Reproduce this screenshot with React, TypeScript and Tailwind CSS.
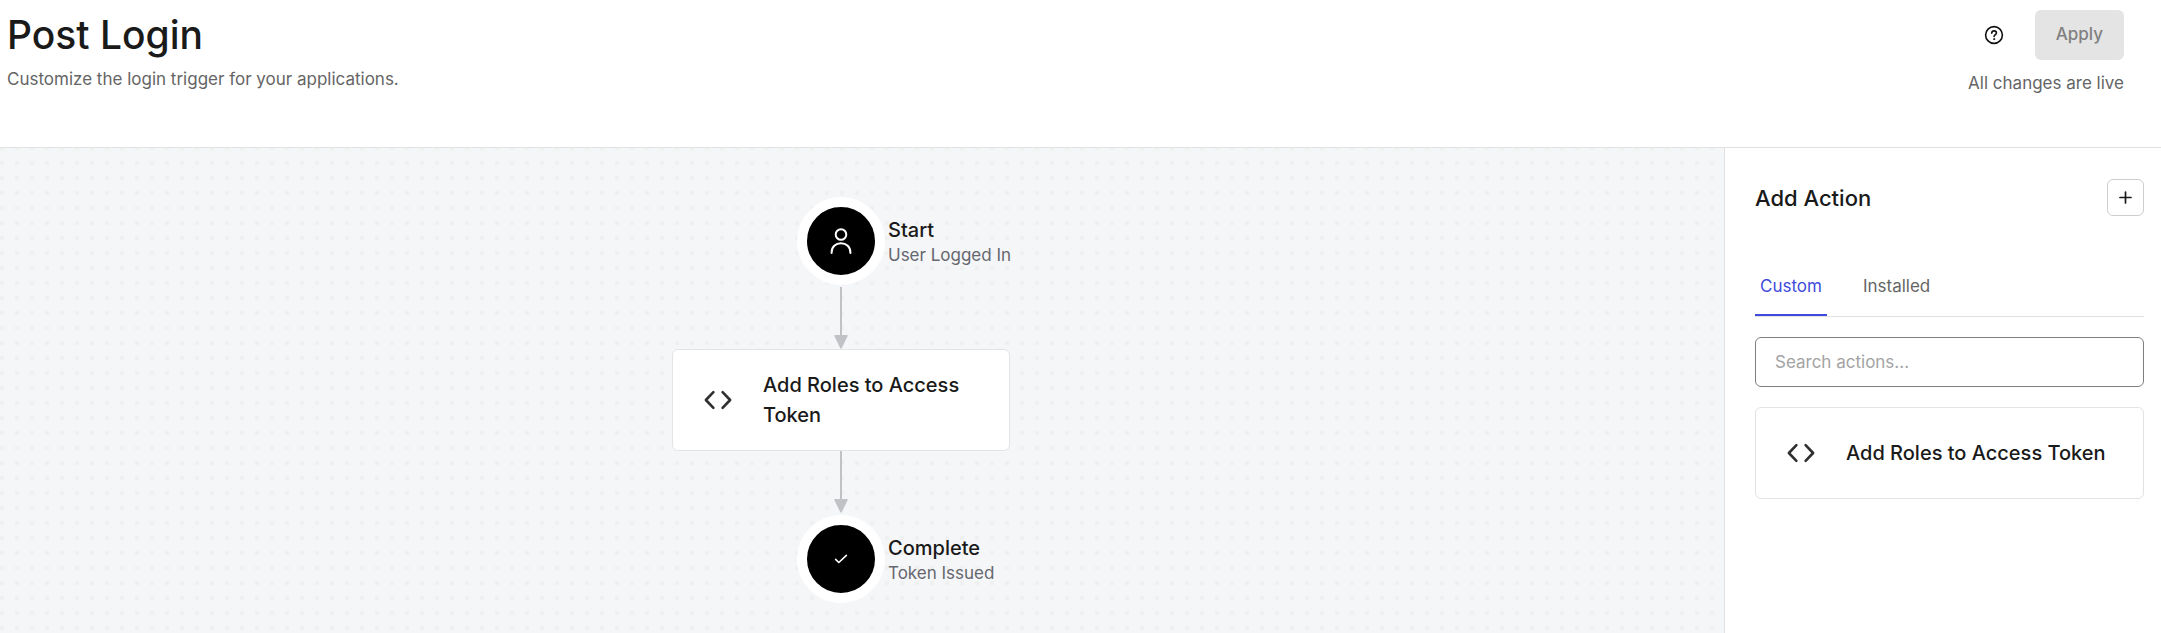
import type { ReactNode } from "react";

function CodeIcon() {
  return (
    <svg width="28" height="20" viewBox="0 0 28 20" fill="none" stroke="#2f2f2f" strokeWidth="2.6" strokeLinecap="round" strokeLinejoin="round" aria-hidden="true" className="shrink-0">
      <path d="M9.4 2.1 L1.9 10 L9.4 17.9" />
      <path d="M18.6 2.1 L26.1 10 L18.6 17.9" />
    </svg>
  );
}

function UserIcon() {
  return (
    <svg width="24" height="28" viewBox="0 0 24 28" fill="none" stroke="#fff" strokeWidth="2" strokeLinecap="round" aria-hidden="true">
      <circle cx="12" cy="7.5" r="5.3" />
      <path d="M2.6 26 V25.4 C2.6 20 6.6 16.2 12 16.2 C17.4 16.2 21.4 20 21.4 25.4 V26" />
    </svg>
  );
}

function CheckIcon() {
  return (
    <svg width="14" height="10" viewBox="0 0 14 10" fill="none" stroke="#fff" strokeWidth="1.6" strokeLinecap="round" strokeLinejoin="round" aria-hidden="true">
      <path d="M1.6 5.4 L4.8 8.5 L12.4 1.4" />
    </svg>
  );
}

function HelpIcon() {
  return (
    <svg width="20" height="20" viewBox="0 0 20 20" fill="none" stroke="#111" strokeWidth="1.6" strokeLinecap="round" strokeLinejoin="round" aria-hidden="true">
      <circle cx="10" cy="10" r="8.4" />
      <path d="M7.7 8.1 C7.8 6.6 8.8 5.9 10.1 5.9 C11.5 5.9 12.4 6.8 12.4 7.9 C12.4 9.5 10.1 9.6 10.1 11.4" />
      <circle cx="10.1" cy="14.1" r="0.6" fill="#111" strokeWidth="0.8" />
    </svg>
  );
}

function Arrow() {
  return (
    <svg width="14" height="62" viewBox="0 0 14 62" fill="#c0c2c6" aria-hidden="true" className="shrink-0">
      <rect x="6" y="0" width="2" height="50" />
      <path d="M1 48 H13 Q14.2 48 13.7 49 L7.8 61 Q7 62.4 6.2 61 L0.3 49 Q-0.2 48 1 48 Z" />
    </svg>
  );
}

function Step({ icon, title, detail }: { icon: ReactNode; title: string; detail: string }) {
  return (
    <div className="grid grid-cols-[1fr_88px_1fr] items-center self-stretch">
      <div className="col-start-2 flex size-[88px] items-center justify-center rounded-full border-10 border-white bg-black">
        {icon}
      </div>
      <div className="pt-1 pl-[3px]">
        <h2 className="text-xl leading-6 font-medium text-[#1a1a1a]">{title}</h2>
        <p className="text-[17px] leading-[26px] text-[#65676e]">{detail}</p>
      </div>
    </div>
  );
}

export default function App() {
  return (
    <div className="flex min-h-screen flex-col bg-white font-['Inter',sans-serif] text-[#1a1a1a]">
      <header className="flex min-h-[148px] items-start justify-between border-b border-[#e1e1e2] pr-[37px] pl-[7px]">
        <div className="pt-2.5">
          <h1 className="text-[39px] leading-[50px] font-medium">Post Login</h1>
          <p className="pt-1.5 text-[17px] leading-[26px] text-[#656565]">Customize the login trigger for your applications.</p>
        </div>
        <div className="flex flex-col items-end pt-2.5">
          <div className="flex items-center gap-[31px]">
            <button type="button" aria-label="Help"><HelpIcon /></button>
            <button type="button" disabled className="h-[50px] rounded-md bg-[#e4e4e4] px-[21px] text-[17px] font-medium text-[#808080]">Apply</button>
          </div>
          <p className="pt-2.5 text-[17px] leading-[26px] text-[#656565]">All changes are live</p>
        </div>
      </header>

      <div className="flex flex-1">
        <main
          className="flex flex-1 flex-col items-center bg-[#f5f6f8] bg-[conic-gradient(from_270deg_at_4px_4px,#eff0f0_90deg,transparent_0)] bg-[length:15px_15px] bg-[position:0_-2px] pr-[42px]"
        >
          <div className="flex w-full flex-col items-center pt-[49px] pb-[30px]">
            <Step icon={<UserIcon />} title="Start" detail="User Logged In" />
            <div className="pt-0.5"><Arrow /></div>
            <div className="flex min-h-[102px] w-[338px] items-center gap-[31px] rounded-md border border-[#e3e4e6] bg-white pr-7 pl-[31px]">
              <CodeIcon />
              <h3 className="text-xl leading-[30px] font-medium">Add Roles to Access Token</h3>
            </div>
            <div className="pb-0.5"><Arrow /></div>
            <Step icon={<CheckIcon />} title="Complete" detail="Token Issued" />
          </div>
        </main>

        <aside className="w-[437px] shrink-0 border-l border-[#e1e1e2] pt-[31px] pr-[17px] pl-[30px]">
          <div className="flex items-center justify-between">
            <h2 className="text-[22px] leading-8 font-medium">Add Action</h2>
            <button type="button" aria-label="Create action" className="flex size-[37px] items-center justify-center rounded-md border border-[#cecece]">
              <svg width="13" height="13" viewBox="0 0 13 13" stroke="#1a1a1a" strokeWidth="1.7" strokeLinecap="round" aria-hidden="true">
                <path d="M6.5 1 V12 M1 6.5 H12" />
              </svg>
            </button>
          </div>
          <div role="tablist" className="mt-11 flex gap-[31px] border-b border-[#e1e1e2] text-[17px] leading-7">
            <button type="button" role="tab" aria-selected="true" className="border-b-2 border-[#3f4bdc] px-[5px] pt-3 pb-3.5 text-[#3f4bdc]">Custom</button>
            <button type="button" role="tab" aria-selected="false" className="border-b-2 border-transparent px-[5px] pt-3 pb-3.5 text-[#656565]">Installed</button>
          </div>
          <input type="search" aria-label="Search actions" placeholder="Search actions..." className="mt-5 block h-[50px] w-full rounded-md border border-[#7e7e7e] px-[19px] text-[17px] placeholder:text-[#a3a3a3]" />
          <div className="mt-5 flex min-h-[92px] items-center gap-[31px] rounded-md border border-[#e3e3e3] pl-[31px]">
            <CodeIcon />
            <h3 className="text-xl leading-[30px] font-medium">Add Roles to Access Token</h3>
          </div>
        </aside>
      </div>
    </div>
  );
}
